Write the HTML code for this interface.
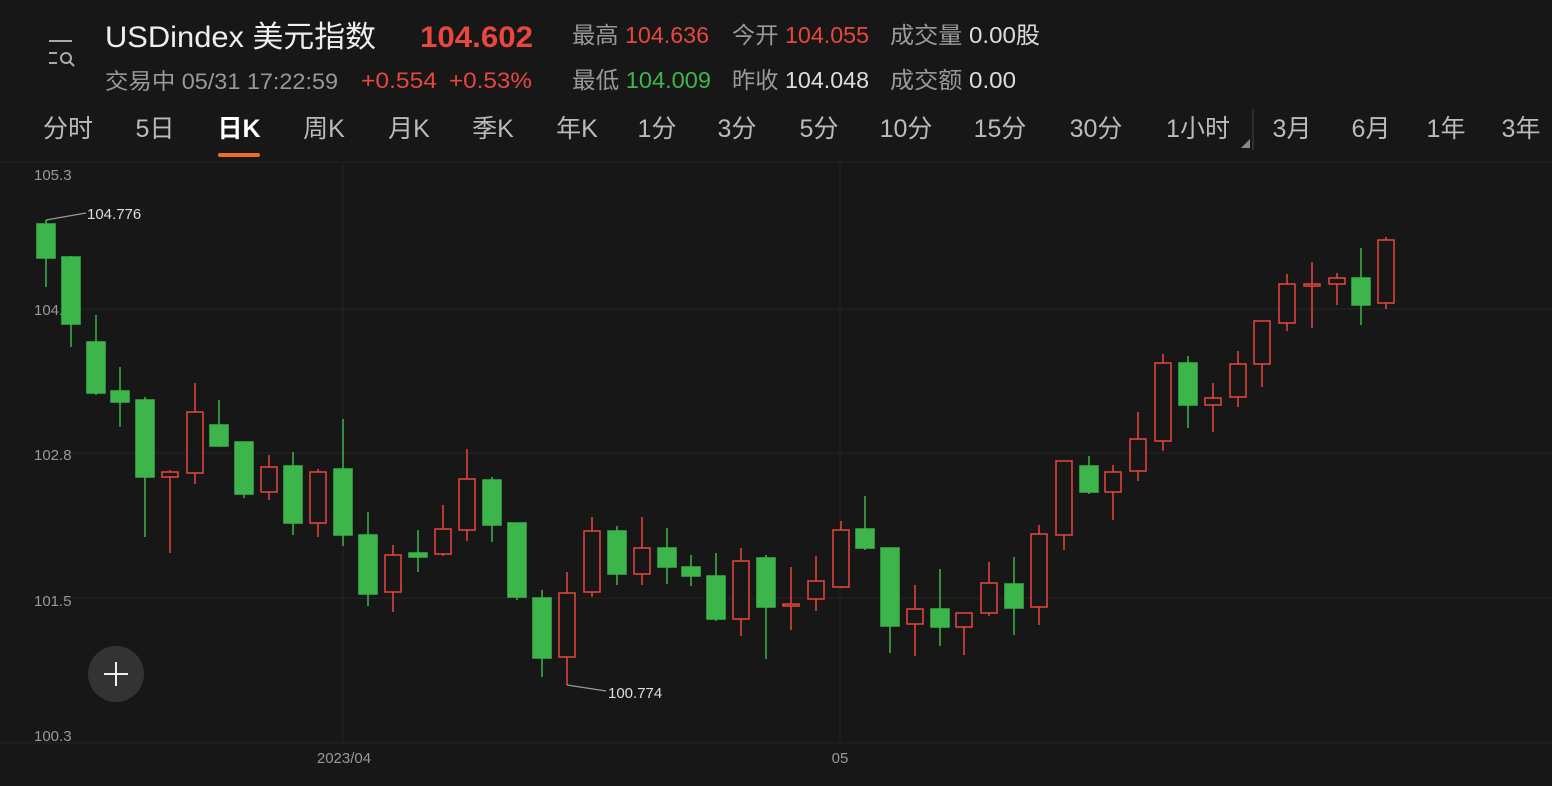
<!DOCTYPE html>
<html><head><meta charset="utf-8"><style>
html,body{margin:0;padding:0;background:#171717;width:1552px;height:786px;overflow:hidden}
svg{display:block}
text{font-family:"Liberation Sans","Noto Sans CJK SC",sans-serif}
</style></head><body>
<svg width="1552" height="786" viewBox="0 0 1552 786" xmlns="http://www.w3.org/2000/svg">
<rect width="1552" height="786" fill="#171717"/>
<g stroke="#aaa" stroke-width="2" fill="none">
<line x1="49" y1="41" x2="72" y2="41"/>
<line x1="49" y1="53" x2="57" y2="53"/>
<line x1="49" y1="63" x2="57" y2="63"/>
<circle cx="66" cy="58" r="5"/>
<line x1="70" y1="62" x2="74" y2="66"/>
</g>
<text x="105" y="47" font-size="30" fill="#eee" textLength="271" lengthAdjust="spacingAndGlyphs">USDindex 美元指数</text>
<text x="420" y="47" font-size="30" fill="#e8463f" font-weight="bold" textLength="113" lengthAdjust="spacingAndGlyphs">104.602</text>
<text x="105" y="89" font-size="22" fill="#999" textLength="233" lengthAdjust="spacingAndGlyphs">交易中 05/31 17:22:59</text>
<text x="361" y="88" font-size="22" fill="#e8463f" textLength="76" lengthAdjust="spacingAndGlyphs">+0.554</text>
<text x="449" y="88" font-size="22" fill="#e8463f" textLength="83" lengthAdjust="spacingAndGlyphs">+0.53%</text>
<g font-size="23">
<text x="572" y="43" fill="#999" textLength="137" lengthAdjust="spacingAndGlyphs">最高 <tspan fill="#e8463f">104.636</tspan></text>
<text x="732" y="43" fill="#999" textLength="137" lengthAdjust="spacingAndGlyphs">今开 <tspan fill="#e8463f">104.055</tspan></text>
<text x="890" y="43" fill="#999" textLength="150" lengthAdjust="spacingAndGlyphs">成交量 <tspan fill="#ddd">0.00股</tspan></text>
<text x="572" y="88" fill="#999" textLength="139" lengthAdjust="spacingAndGlyphs">最低 <tspan fill="#3cb54a">104.009</tspan></text>
<text x="732" y="88" fill="#999" textLength="137" lengthAdjust="spacingAndGlyphs">昨收 <tspan fill="#ddd">104.048</tspan></text>
<text x="890" y="88" fill="#999" textLength="126" lengthAdjust="spacingAndGlyphs">成交额 <tspan fill="#ddd">0.00</tspan></text>
</g>
<g font-size="25" fill="#bbb" text-anchor="middle">
<text x="68" y="137">分时</text>
<text x="155" y="137">5日</text>
<text x="239" y="137" fill="#fff" font-weight="bold">日K</text>
<text x="324" y="137">周K</text>
<text x="409" y="137">月K</text>
<text x="493" y="137">季K</text>
<text x="577" y="137">年K</text>
<text x="657" y="137">1分</text>
<text x="737" y="137">3分</text>
<text x="819" y="137">5分</text>
<text x="906" y="137">10分</text>
<text x="1000" y="137">15分</text>
<text x="1096" y="137">30分</text>
<text x="1198" y="137">1小时</text>
<text x="1292" y="137">3月</text>
<text x="1371" y="137">6月</text>
<text x="1446" y="137">1年</text>
<text x="1521" y="137">3年</text>
</g>
<rect x="218" y="153" width="42" height="4" rx="2" fill="#f06a2a"/>
<polygon points="1250,139 1250,148 1241,148" fill="#888"/>
<line x1="1253" y1="109" x2="1253" y2="150" stroke="#444" stroke-width="1"/>
<line x1="0" y1="162" x2="1552" y2="162" stroke="#222"/>
<g stroke="#242424" stroke-width="1">
<line x1="60" y1="309" x2="1552" y2="309"/>
<line x1="60" y1="453" x2="1552" y2="453"/>
<line x1="60" y1="598" x2="1552" y2="598"/>
<line x1="0" y1="743" x2="1552" y2="743"/>
<line x1="343" y1="162" x2="343" y2="743"/>
<line x1="840" y1="162" x2="840" y2="743"/>
</g>
<g font-size="15" fill="#999">
<text x="34" y="180">105.3</text>
<text x="34" y="315">104.0</text>
<text x="34" y="460">102.8</text>
<text x="34" y="606">101.5</text>
<text x="34" y="741">100.3</text>
<text x="344" y="763" text-anchor="middle">2023/04</text>
<text x="840" y="763" text-anchor="middle">05</text>
</g>
<g stroke-width="1.5">
<g stroke="#3cb54a" fill="#3cb54a">
<line x1="46" y1="220" x2="46" y2="287"/><rect x="37" y="224" width="18" height="34"/>
<line x1="71" y1="256" x2="71" y2="347"/><rect x="62" y="257" width="18" height="67"/>
<line x1="96" y1="315" x2="96" y2="395"/><rect x="87" y="342" width="18" height="51"/>
<line x1="120" y1="367" x2="120" y2="427"/><rect x="111" y="391" width="18" height="11"/>
<line x1="145" y1="397" x2="145" y2="537"/><rect x="136" y="400" width="18" height="77"/>
<line x1="219" y1="400" x2="219" y2="447"/><rect x="210" y="425" width="18" height="21"/>
<line x1="244" y1="442" x2="244" y2="498"/><rect x="235" y="442" width="18" height="52"/>
<line x1="293" y1="452" x2="293" y2="535"/><rect x="284" y="466" width="18" height="57"/>
<line x1="343" y1="419" x2="343" y2="546"/><rect x="334" y="469" width="18" height="66"/>
<line x1="368" y1="512" x2="368" y2="606"/><rect x="359" y="535" width="18" height="59"/>
<line x1="418" y1="530" x2="418" y2="572"/><rect x="409" y="553" width="18" height="4"/>
<line x1="492" y1="477" x2="492" y2="542"/><rect x="483" y="480" width="18" height="45"/>
<line x1="517" y1="523" x2="517" y2="600"/><rect x="508" y="523" width="18" height="74"/>
<line x1="542" y1="590" x2="542" y2="677"/><rect x="533" y="598" width="18" height="60"/>
<line x1="617" y1="526" x2="617" y2="585"/><rect x="608" y="531" width="18" height="43"/>
<line x1="667" y1="528" x2="667" y2="584"/><rect x="658" y="548" width="18" height="19"/>
<line x1="691" y1="555" x2="691" y2="586"/><rect x="682" y="567" width="18" height="9"/>
<line x1="716" y1="553" x2="716" y2="621"/><rect x="707" y="576" width="18" height="43"/>
<line x1="766" y1="555" x2="766" y2="659"/><rect x="757" y="558" width="18" height="49"/>
<line x1="865" y1="496" x2="865" y2="550"/><rect x="856" y="529" width="18" height="19"/>
<line x1="890" y1="548" x2="890" y2="653"/><rect x="881" y="548" width="18" height="78"/>
<line x1="940" y1="569" x2="940" y2="646"/><rect x="931" y="609" width="18" height="18"/>
<line x1="1014" y1="557" x2="1014" y2="635"/><rect x="1005" y="584" width="18" height="24"/>
<line x1="1089" y1="456" x2="1089" y2="494"/><rect x="1080" y="466" width="18" height="26"/>
<line x1="1188" y1="356" x2="1188" y2="428"/><rect x="1179" y="363" width="18" height="42"/>
<line x1="1361" y1="248" x2="1361" y2="325"/><rect x="1352" y="278" width="18" height="27"/>
</g>
<g stroke="#e8463f" fill="#171717">
<line x1="170" y1="470" x2="170" y2="553"/><rect x="162" y="472" width="16" height="5"/>
<line x1="195" y1="383" x2="195" y2="484"/><rect x="187" y="412" width="16" height="61"/>
<line x1="269" y1="455" x2="269" y2="500"/><rect x="261" y="467" width="16" height="25"/>
<line x1="318" y1="469" x2="318" y2="537"/><rect x="310" y="472" width="16" height="51"/>
<line x1="393" y1="545" x2="393" y2="612"/><rect x="385" y="555" width="16" height="37"/>
<line x1="443" y1="505" x2="443" y2="556"/><rect x="435" y="529" width="16" height="25"/>
<line x1="467" y1="449" x2="467" y2="541"/><rect x="459" y="479" width="16" height="51"/>
<line x1="567" y1="572" x2="567" y2="685"/><rect x="559" y="593" width="16" height="64"/>
<line x1="592" y1="517" x2="592" y2="597"/><rect x="584" y="531" width="16" height="61"/>
<line x1="642" y1="517" x2="642" y2="585"/><rect x="634" y="548" width="16" height="26"/>
<line x1="741" y1="548" x2="741" y2="636"/><rect x="733" y="561" width="16" height="58"/>
<line x1="791" y1="567" x2="791" y2="630"/><rect x="783" y="604" width="16" height="2"/>
<line x1="816" y1="556" x2="816" y2="611"/><rect x="808" y="581" width="16" height="18"/>
<line x1="841" y1="521" x2="841" y2="588"/><rect x="833" y="530" width="16" height="57"/>
<line x1="915" y1="585" x2="915" y2="656"/><rect x="907" y="609" width="16" height="15"/>
<line x1="964" y1="613" x2="964" y2="655"/><rect x="956" y="613" width="16" height="14"/>
<line x1="989" y1="562" x2="989" y2="616"/><rect x="981" y="583" width="16" height="30"/>
<line x1="1039" y1="525" x2="1039" y2="625"/><rect x="1031" y="534" width="16" height="73"/>
<line x1="1064" y1="461" x2="1064" y2="550"/><rect x="1056" y="461" width="16" height="74"/>
<line x1="1113" y1="465" x2="1113" y2="520"/><rect x="1105" y="472" width="16" height="20"/>
<line x1="1138" y1="412" x2="1138" y2="481"/><rect x="1130" y="439" width="16" height="32"/>
<line x1="1163" y1="354" x2="1163" y2="451"/><rect x="1155" y="363" width="16" height="78"/>
<line x1="1213" y1="383" x2="1213" y2="432"/><rect x="1205" y="398" width="16" height="7"/>
<line x1="1238" y1="351" x2="1238" y2="407"/><rect x="1230" y="364" width="16" height="33"/>
<line x1="1262" y1="321" x2="1262" y2="387"/><rect x="1254" y="321" width="16" height="43"/>
<line x1="1287" y1="274" x2="1287" y2="331"/><rect x="1279" y="284" width="16" height="39"/>
<line x1="1312" y1="262" x2="1312" y2="328"/><rect x="1304" y="284" width="16" height="2"/>
<line x1="1337" y1="273" x2="1337" y2="305"/><rect x="1329" y="278" width="16" height="6"/>
<line x1="1386" y1="237" x2="1386" y2="309"/><rect x="1378" y="240" width="16" height="63"/>
</g>
</g>
<polyline points="46,220 86,213" stroke="#999" fill="none" stroke-width="1.2"/>
<text x="87" y="219" font-size="15" fill="#ddd">104.776</text>
<polyline points="567,685 606,691" stroke="#999" fill="none" stroke-width="1.2"/>
<text x="608" y="698" font-size="15" fill="#ddd">100.774</text>
<circle cx="116" cy="674" r="28" fill="#333"/>
<g stroke="#eee" stroke-width="2"><line x1="104" y1="674" x2="128" y2="674"/><line x1="116" y1="662" x2="116" y2="686"/></g>
</svg>
</body></html>
